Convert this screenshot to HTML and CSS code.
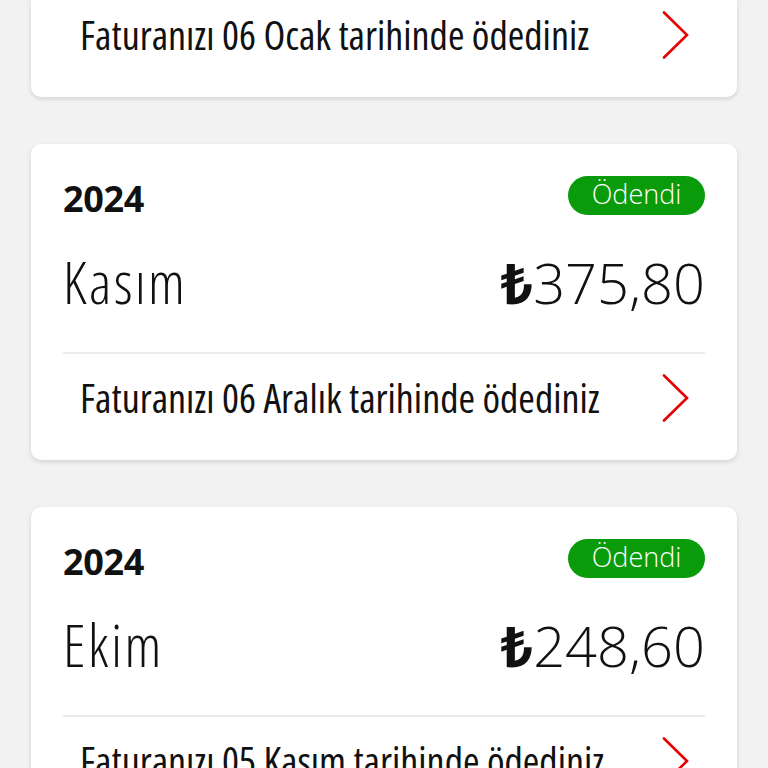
FILE: index.html
```html
<!DOCTYPE html>
<html lang="tr">
<head>
<meta charset="utf-8">
<title>Faturalar</title>
<link rel="stylesheet" href="styles.css">
</head>
<body>
<main class="list">
  <section class="card card-partial">
    <a class="card-foot" href="#">
      <span class="foot-text">Faturanızı 06 Ocak tarihinde ödediniz</span>
      <svg class="chev" viewBox="0 0 27 48" width="27" height="48"><polyline points="2,1.5 25,24 2,46.5" fill="none" stroke="#e60000" stroke-width="2.6" stroke-linecap="round" stroke-linejoin="miter"/></svg>
    </a>
  </section>

  <section class="card">
    <div class="card-head">
      <span class="year">2024</span>
      <span class="badge">Ödendi</span>
    </div>
    <div class="card-main">
      <span class="month">Kasım</span>
      <span class="amount"><span class="cur">₺</span>375,80</span>
    </div>
    <div class="divider"></div>
    <a class="card-foot" href="#">
      <span class="foot-text">Faturanızı 06 Aralık tarihinde ödediniz</span>
      <svg class="chev" viewBox="0 0 27 48" width="27" height="48"><polyline points="2,1.5 25,24 2,46.5" fill="none" stroke="#e60000" stroke-width="2.6" stroke-linecap="round" stroke-linejoin="miter"/></svg>
    </a>
  </section>

  <section class="card">
    <div class="card-head">
      <span class="year">2024</span>
      <span class="badge">Ödendi</span>
    </div>
    <div class="card-main">
      <span class="month">Ekim</span>
      <span class="amount"><span class="cur">₺</span>248,60</span>
    </div>
    <div class="divider"></div>
    <a class="card-foot" href="#">
      <span class="foot-text">Faturanızı 05 Kasım tarihinde ödediniz</span>
      <svg class="chev" viewBox="0 0 27 48" width="27" height="48"><polyline points="2,1.5 25,24 2,46.5" fill="none" stroke="#e60000" stroke-width="2.6" stroke-linecap="round" stroke-linejoin="miter"/></svg>
    </a>
  </section>
</main>
</body>
</html>
```
FILE: styles.css
```css
html, body {
  margin: 0;
  padding: 0;
  background: #f2f2f2;
  overflow: hidden;
}
body {
  font-family: "Open Sans", "Noto Sans", sans-serif;
  color: #111;
}
.list {
  display: flex;
  flex-direction: column;
  gap: 47px;
  padding: 0 31px;
  margin-top: -9px;
}
.card {
  background: #fff;
  border-radius: 10px;
  box-shadow: 0 2px 5px rgba(0, 0, 0, 0.13);
  padding: 32px 32px 18px;
  display: flex;
  flex-direction: column;
}
.card-partial {
  padding-top: 0;
}
.card-head {
  display: flex;
  justify-content: space-between;
  align-items: center;
  height: 39px;
}
.year {
  font-weight: 700;
  font-size: 36px;
  line-height: 1;
  font-stretch: 96%;
  letter-spacing: -0.3px;
  color: #111;
  margin-top: 6px;
}
.badge {
  background: #0a9b0a;
  color: #fff;
  border-radius: 20px;
  height: 39px;
  width: 137px;
  box-sizing: border-box;
  display: flex;
  align-items: center;
  justify-content: center;
  font-size: 27px;
  font-weight: 300;
  font-stretch: 90%;
  line-height: 1;
  padding-bottom: 4px;
}
.card-main {
  display: flex;
  justify-content: space-between;
  align-items: baseline;
  margin-top: 39px;
  height: 56px;
}
.month {
  font-size: 58px;
  font-weight: 300;
  font-stretch: 75%;
  letter-spacing: 2.5px;
  line-height: 56px;
  color: #111;
}
.amount {
  font-size: 56px;
  font-weight: 300;
  font-stretch: 96%;
  line-height: 56px;
  color: #111;
}
.cur {
  font-weight: 700;
}
.divider {
  height: 2px;
  background: #ebebeb;
  margin-top: 42px;
}
.card-foot {
  display: flex;
  justify-content: space-between;
  align-items: center;
  height: 88px;
  padding: 0 16px 0 17px;
  text-decoration: none;
  color: #111;
}
.foot-text {
  font-size: 40px;
  font-weight: 400;
  font-stretch: 75%;
  line-height: 1;
}
.chev {
  display: block;
  flex: none;
}
```
